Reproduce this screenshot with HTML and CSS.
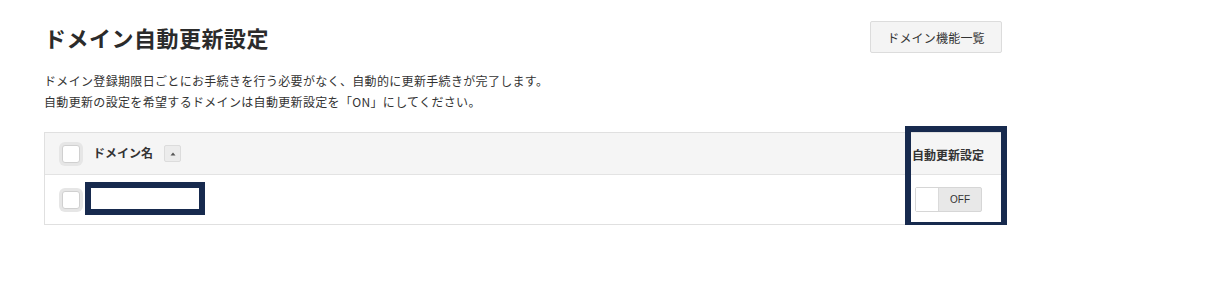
FILE: index.html
```html
<!DOCTYPE html>
<html lang="ja">
<head>
<meta charset="utf-8">
<link rel="stylesheet" href="styles.css">
</head>
<body>
<div class="page">
  <div class="head">
    <h1 class="title">ドメイン自動更新設定</h1>
    <button class="btn">ドメイン機能一覧</button>
  </div>
  <p class="desc">ドメイン登録期限日ごとにお手続きを行う必要がなく、自動的に更新手続きが完了します。<br>自動更新の設定を希望するドメインは自動更新設定を「ON」にしてください。</p>
  <div class="table">
    <div class="row hrow">
      <div class="cell-left">
        <span class="cb"></span>
        <span class="hname">ドメイン名</span>
        <span class="sort"><svg width="6" height="4" viewBox="0 0 6 4"><path d="M3 0.5 L5.5 3.5 L0.5 3.5 Z" fill="#555"/></svg></span>
      </div>
      <div class="cell-right hright">自動更新設定</div>
    </div>
    <div class="row brow">
      <div class="cell-left">
        <span class="cb"></span>
        <span class="mask"></span>
      </div>
      <div class="cell-right">
        <div class="toggle"><span class="knob"></span><span class="off">OFF</span></div>
      </div>
    </div>
  </div>
  <div class="annot"></div>
</div>
</body>
</html>
```
FILE: styles.css
```css
html, body { margin: 0; padding: 0; background: #fff; }
body { font-family: "Noto Sans CJK JP", "Noto Sans", sans-serif; color: #333; }
.page { position: relative; padding: 21px 0 0 44px; width: 958px; }
.head { display: flex; justify-content: space-between; align-items: flex-start; height: 31px; }
.title { margin: 0; padding-top: 0; font-size: 22px; font-weight: bold; line-height: 32px; color: #2b2b2b; letter-spacing: 0.5px; }
.btn { font-family: inherit; font-size: 12px; color: #333; background: #f4f4f4; border: 1px solid #dcdcdc; border-radius: 2px; height: 32px; width: 132px; padding: 0; letter-spacing: 0.2px; }
.desc { margin: 18px 0 0; font-size: 12px; line-height: 21px; color: #333; letter-spacing: 0.33px; }
.table { margin-top: 20px; border: 1px solid #e0e0e0; }
.row { display: flex; justify-content: space-between; align-items: center; }
.hrow { background: #f5f5f5; height: 41px; border-bottom: 1px solid #e3e3e3; }
.brow { height: 49px; }
.cell-left { display: flex; align-items: center; padding-left: 17px; }
.cb { width: 18px; height: 18px; box-sizing: border-box; background: #fff; border: 1px solid #d0d0d0; border-radius: 3px; box-shadow: 0 0 0 3px #e6e6e6; }
.hname { margin-left: 13px; font-size: 12px; font-weight: bold; color: #333; margin-top: -2px; }
.sort { margin-left: 11px; width: 17px; height: 17px; box-sizing: border-box; border: 1px solid #dcdcdc; border-radius: 2px; background: #ececec; display: flex; align-items: center; justify-content: center; }
.mask { display: block; width: 108px; height: 20px; margin-left: 10px; }
.cell-right { width: 89px; display: flex; justify-content: flex-start; }
.hright { font-size: 12px; font-weight: bold; color: #333; padding-top: 2px; }
.brow .cell-right { padding-left: 3px; width: 86px; }
.toggle { display: flex; width: 67px; height: 25px; box-sizing: border-box; border: 1px solid #d6d6d6; border-radius: 2px; background: #e8e8e8; }
.knob { width: 22px; background: #fff; border-right: 1px solid #dadada; }
.off { flex: 1; display: flex; align-items: center; justify-content: center; font-size: 10px; font-family: "Liberation Sans", Arial, sans-serif; color: #333; }
.annot { position: absolute; left: 905px; top: 126px; width: 90px; height: 90px; border: 6px solid #172a4e; }
.brow .mask { position: relative; }
.brow .mask::after { content: ""; position: absolute; left: -5px; top: -8px; width: 108px; height: 21px; border: 6px solid #172a4e; }
```
